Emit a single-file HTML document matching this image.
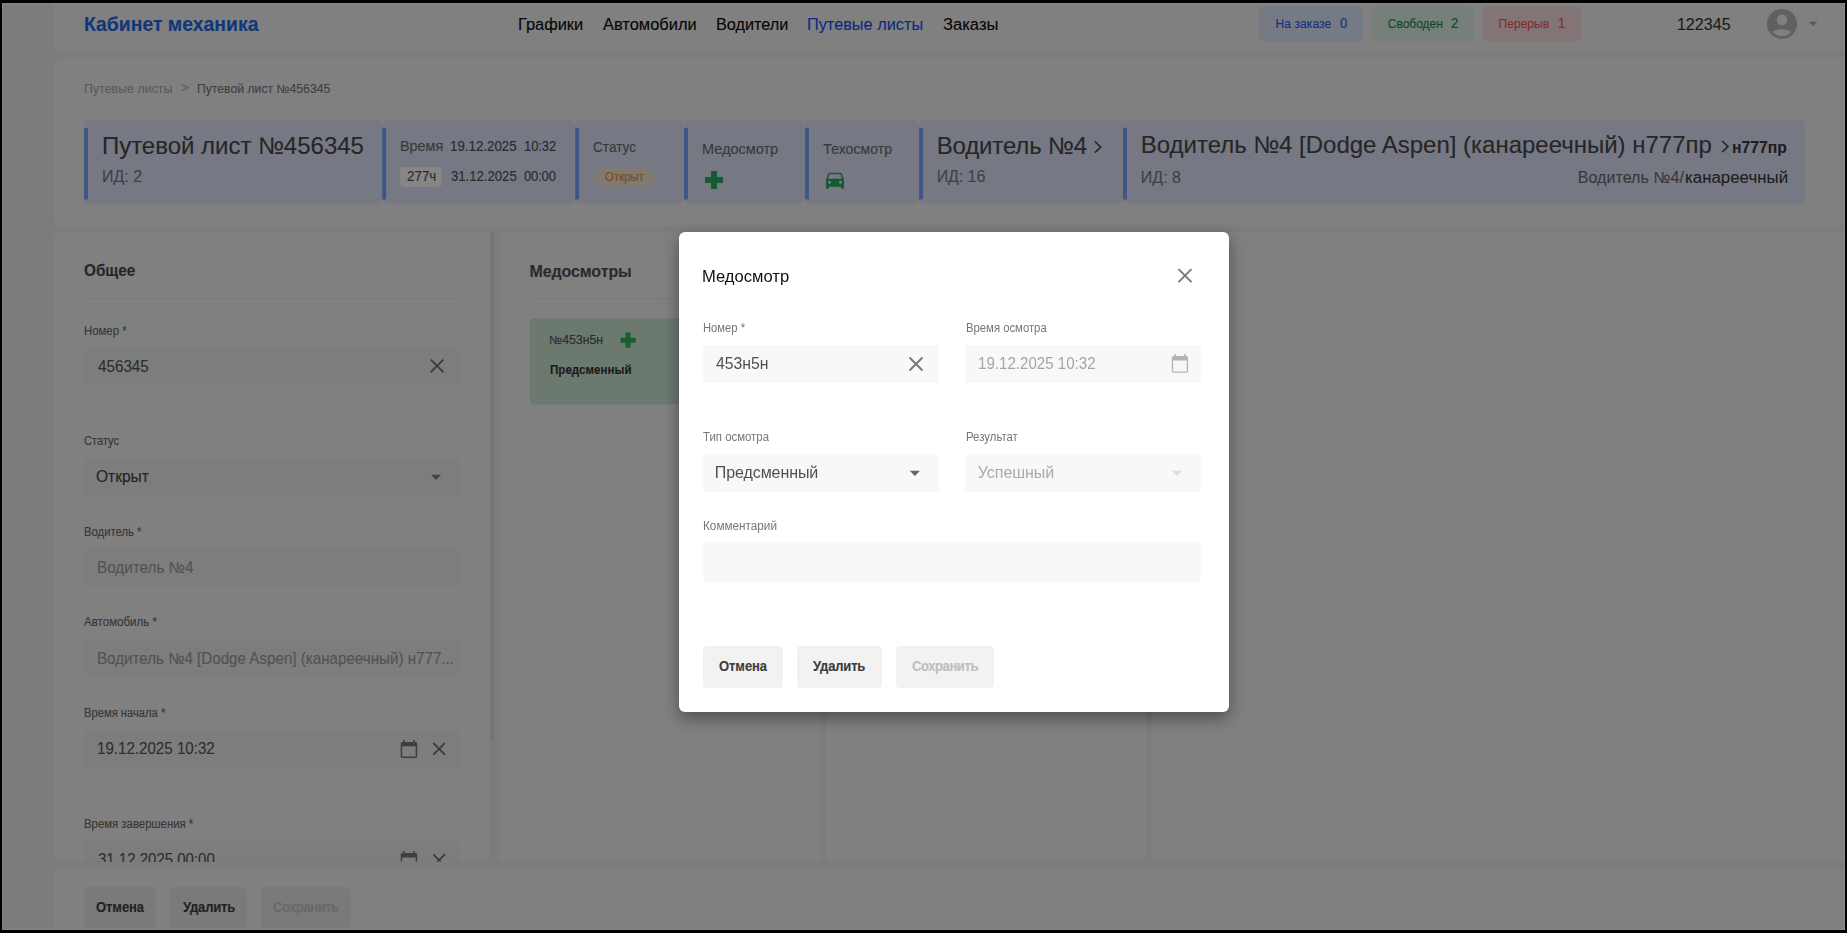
<!DOCTYPE html>
<html lang="ru"><head><meta charset="utf-8"><title>Кабинет механика</title>
<style>
html,body{margin:0;padding:0;background:#000;}
body{position:relative;width:1847px;height:933px;overflow:hidden;font-family:"Liberation Sans", sans-serif;}
body>div,.tx span{position:absolute;display:block;}
.lay{position:absolute;left:0;top:0;}
.tx span{white-space:pre;transform-origin:0 0;}
#texts span{-webkit-text-stroke:0.12px currentColor;}
#texts{left:0;top:0;}
#mtexts{position:absolute;left:0;top:0;width:1847px;height:933px;will-change:transform;}
</style></head>
<body>
<svg class="lay" width="1847" height="933" viewBox="0 0 1847 933">
<path fill="#7c7c7c" d="M2 3H1845V930H2V3Z"/>
<path fill="#808080" d="M54 3H1845V52H60A6 6 0 0 1 54 46V3Z"/>
<path fill="#767a84" d="M1264.1 6.2H1358.1A5 5 0 0 1 1363.1 11.2V36.8A5 5 0 0 1 1358.1 41.8H1264.1A5 5 0 0 1 1259.1 36.8V11.2A5 5 0 0 1 1264.1 6.2Z"/>
<path fill="#767f79" d="M1376.3 6.2H1469A5 5 0 0 1 1474 11.2V36.8A5 5 0 0 1 1469 41.8H1376.3A5 5 0 0 1 1371.3 36.8V11.2A5 5 0 0 1 1376.3 6.2Z"/>
<path fill="#837575" d="M1487.3 6.2H1575.9A5 5 0 0 1 1580.9 11.2V36.8A5 5 0 0 1 1575.9 41.8H1487.3A5 5 0 0 1 1482.3 36.8V11.2A5 5 0 0 1 1487.3 6.2Z"/>
<path fill="#808080" d="M60 58H1845V226H60A6 6 0 0 1 54 220V64A6 6 0 0 1 60 58Z"/>
<path fill="#767983" d="M88.8 120H376.9A5 5 0 0 1 381.9 125V198.8A5 5 0 0 1 376.9 203.8H88.8A5 5 0 0 1 83.8 198.8V125A5 5 0 0 1 88.8 120Z"/>
<path fill="#767983" d="M386.9 120H569.8A5 5 0 0 1 574.8 125V198.8A5 5 0 0 1 569.8 203.8H386.9A5 5 0 0 1 381.9 198.8V125A5 5 0 0 1 386.9 120Z"/>
<path fill="#767983" d="M579.8 120H678.7A5 5 0 0 1 683.7 125V198.8A5 5 0 0 1 678.7 203.8H579.8A5 5 0 0 1 574.8 198.8V125A5 5 0 0 1 579.8 120Z"/>
<path fill="#767983" d="M688.7 120H799.7A5 5 0 0 1 804.7 125V198.8A5 5 0 0 1 799.7 203.8H688.7A5 5 0 0 1 683.7 198.8V125A5 5 0 0 1 688.7 120Z"/>
<path fill="#767983" d="M809.7 120H913.8A5 5 0 0 1 918.8 125V198.8A5 5 0 0 1 913.8 203.8H809.7A5 5 0 0 1 804.7 198.8V125A5 5 0 0 1 809.7 120Z"/>
<path fill="#767983" d="M923.8 120H1117.7A5 5 0 0 1 1122.7 125V198.8A5 5 0 0 1 1117.7 203.8H923.8A5 5 0 0 1 918.8 198.8V125A5 5 0 0 1 923.8 120Z"/>
<path fill="#767983" d="M1127.7 120H1799.6A5 5 0 0 1 1804.6 125V198.8A5 5 0 0 1 1799.6 203.8H1127.7A5 5 0 0 1 1122.7 198.8V125A5 5 0 0 1 1127.7 120Z"/>
<path fill="#3e5686" d="M84 128H87.9V199.5H84V128Z"/>
<path fill="#3e5686" d="M382.2 128H386.1V199.5H382.2V128Z"/>
<path fill="#3e5686" d="M575.2 128H579.1V199.5H575.2V128Z"/>
<path fill="#3e5686" d="M684 128H687.9V199.5H684V128Z"/>
<path fill="#3e5686" d="M805.1 128H809V199.5H805.1V128Z"/>
<path fill="#3e5686" d="M919.1 128H923V199.5H919.1V128Z"/>
<path fill="#3e5686" d="M1123 128H1126.9V199.5H1123V128Z"/>
<path fill="#868686" d="M404 167.1H437.8A4 4 0 0 1 441.8 171.1V182.8A4 4 0 0 1 437.8 186.8H404A4 4 0 0 1 400 182.8V171.1A4 4 0 0 1 404 167.1Z"/>
<path fill="#807a73" d="M603.1 167.8H645.8A10 10 0 0 1 655.8 177.8V176.8A10 10 0 0 1 645.8 186.8H603.1A10 10 0 0 1 593.1 176.8V177.8A10 10 0 0 1 603.1 167.8Z"/>
<path fill="#808080" d="M60 232H483.6A6 6 0 0 1 489.6 238V855.6A6 6 0 0 1 483.6 861.6H60A6 6 0 0 1 54 855.6V238A6 6 0 0 1 60 232Z"/>
<path fill="#747474" d="M492.3 232H492.1A2 2 0 0 1 494.1 234V740A2 2 0 0 1 492.1 742H492.3A2 2 0 0 1 490.3 740V234A2 2 0 0 1 492.3 232Z"/>
<path fill="#7a7a7a" d="M84.2 298H459.7V299H84.2V298Z"/>
<path fill="#7d7d7d" d="M87 348.1H456.7A3 3 0 0 1 459.7 351.1V382.1A3 3 0 0 1 456.7 385.1H87A3 3 0 0 1 84 382.1V351.1A3 3 0 0 1 87 348.1Z"/>
<path fill="#7d7d7d" d="M87 458H456.7A3 3 0 0 1 459.7 461V492.6A3 3 0 0 1 456.7 495.6H87A3 3 0 0 1 84 492.6V461A3 3 0 0 1 87 458Z"/>
<path fill="#7d7d7d" d="M87 548.1H456.7A3 3 0 0 1 459.7 551.1V582.7A3 3 0 0 1 456.7 585.7H87A3 3 0 0 1 84 582.7V551.1A3 3 0 0 1 87 548.1Z"/>
<path fill="#7d7d7d" d="M87 638.9H456.7A3 3 0 0 1 459.7 641.9V673.4A3 3 0 0 1 456.7 676.4H87A3 3 0 0 1 84 673.4V641.9A3 3 0 0 1 87 638.9Z"/>
<path fill="#7d7d7d" d="M87 730.3H456.7A3 3 0 0 1 459.7 733.3V764.6A3 3 0 0 1 456.7 767.6H87A3 3 0 0 1 84 764.6V733.3A3 3 0 0 1 87 730.3Z"/>
<path fill="#7d7d7d" d="M87 841.5H456.7A3 3 0 0 1 459.7 844.5V861.6H84V844.5A3 3 0 0 1 87 841.5Z"/>
<path fill="#808080" d="M505.7 232.2H814.5A6 6 0 0 1 820.5 238.2V855.8A6 6 0 0 1 814.5 861.8H505.7A6 6 0 0 1 499.7 855.8V238.2A6 6 0 0 1 505.7 232.2Z"/>
<path fill="#808080" d="M831.5 232.2H1140.1A6 6 0 0 1 1146.1 238.2V855.8A6 6 0 0 1 1140.1 861.8H831.5A6 6 0 0 1 825.5 855.8V238.2A6 6 0 0 1 831.5 232.2Z"/>
<path fill="#808080" d="M1157.8 232.2H1845V861.8H1157.8A6 6 0 0 1 1151.8 855.8V238.2A6 6 0 0 1 1157.8 232.2Z"/>
<path fill="#7a7a7a" d="M530.4 298H790V299H530.4V298Z"/>
<path fill="#6b796f" d="M533.9 318.2H786A4 4 0 0 1 790 322.2V400.6A4 4 0 0 1 786 404.6H533.9A4 4 0 0 1 529.9 400.6V322.2A4 4 0 0 1 533.9 318.2Z"/>
<path fill="#808080" d="M60 868H1845V930H54V874A6 6 0 0 1 60 868Z"/>
<path fill="#7a7a7a" d="M88.2 886.9H151.6A4 4 0 0 1 155.6 890.9V924.5A4 4 0 0 1 151.6 928.5H88.2A4 4 0 0 1 84.2 924.5V890.9A4 4 0 0 1 88.2 886.9Z"/>
<path fill="#7a7a7a" d="M173.9 886.9H243.1A4 4 0 0 1 247.1 890.9V924.5A4 4 0 0 1 243.1 928.5H173.9A4 4 0 0 1 169.9 924.5V890.9A4 4 0 0 1 173.9 886.9Z"/>
<path fill="#7a7a7a" d="M264.9 886.9H347.1A4 4 0 0 1 351.1 890.9V924.5A4 4 0 0 1 347.1 928.5H264.9A4 4 0 0 1 260.9 924.5V890.9A4 4 0 0 1 264.9 886.9Z"/>
<rect x="2.5" y="3.5" width="1842" height="926" fill="none" stroke="#ffffff" stroke-opacity="0.075"/>
</svg>
<div style="left:679.0px;top:232.0px;width:550.0px;height:480.0px;background:#ffffff;border-radius:6px;box-shadow:0 6px 16px rgba(0,0,0,.4);"></div>
<svg class="lay" width="1847" height="933" viewBox="0 0 1847 933">
<path fill="#f8f8f8" d="M707 345H935A4 4 0 0 1 939 349V379A4 4 0 0 1 935 383H707A4 4 0 0 1 703 379V349A4 4 0 0 1 707 345Z"/>
<path fill="#f8f8f8" d="M969 345H1197A4 4 0 0 1 1201 349V379A4 4 0 0 1 1197 383H969A4 4 0 0 1 965 379V349A4 4 0 0 1 969 345Z"/>
<path fill="#f8f8f8" d="M707 454H935A4 4 0 0 1 939 458V488A4 4 0 0 1 935 492H707A4 4 0 0 1 703 488V458A4 4 0 0 1 707 454Z"/>
<path fill="#f8f8f8" d="M969 454H1197A4 4 0 0 1 1201 458V488A4 4 0 0 1 1197 492H969A4 4 0 0 1 965 488V458A4 4 0 0 1 969 454Z"/>
<path fill="#f8f8f8" d="M707 542H1197A4 4 0 0 1 1201 546V578A4 4 0 0 1 1197 582H707A4 4 0 0 1 703 578V546A4 4 0 0 1 707 542Z"/>
<path fill="#f2f2f2" d="M707 646H779A4 4 0 0 1 783 650V684A4 4 0 0 1 779 688H707A4 4 0 0 1 703 684V650A4 4 0 0 1 707 646Z"/>
<path fill="#f2f2f2" d="M801 646H878A4 4 0 0 1 882 650V684A4 4 0 0 1 878 688H801A4 4 0 0 1 797 684V650A4 4 0 0 1 801 646Z"/>
<path fill="#f2f2f2" d="M900 646H990A4 4 0 0 1 994 650V684A4 4 0 0 1 990 688H900A4 4 0 0 1 896 684V650A4 4 0 0 1 900 646Z"/>
<g transform="translate(1767.00 8.90)"><path fill-rule="evenodd" fill="#606060" d="M15 0A15 15 0 1 0 15 30A15 15 0 1 0 15 0ZM15 5.7A5.3 5.3 0 1 1 15 16.3A5.3 5.3 0 1 1 15 5.7ZM5.6 22.9Q9.5 20.3 15 20.3Q20.5 20.3 24.4 22.9Q20.8 27.2 15 27.2Q9.2 27.2 5.6 22.9Z"/></g>
<g transform="translate(1808.90 21.70)"><path d="M0 0H8.4L4.2 4.6Z" fill="#5a5a5a"/></g>
<g transform="translate(705.00 171.00)"><path d="M6.0 0H12.0V6.0H18V12.0H12.0V18H6.0V12.0H0V6.0H6.0Z" fill="#165a32"/></g>
<g transform="translate(823.00 167.70)"><path fill="#165a32" d="M18.92 6.01C18.72 5.42 18.16 5 17.5 5h-11c-.66 0-1.21.42-1.42 1.01L3 12v8c0 .55.45 1 1 1h1c.55 0 1-.45 1-1v-1h12v1c0 .55.45 1 1 1h1c.55 0 1-.45 1-1v-8l-2.08-5.99zM6.5 16c-.83 0-1.5-.67-1.5-1.5S5.67 13 6.5 13s1.5.67 1.5 1.5S7.33 16 6.5 16zm11 0c-.83 0-1.5-.67-1.5-1.5s.67-1.5 1.5-1.5 1.5.67 1.5 1.5-.67 1.5-1.5 1.5zM5 11l1.5-4.5h11L19 11H5z"/></g>
<g transform="translate(1094.50 141.10)"><path d="M0.4 0.4L6.199999999999999 6.0L0.4 11.6" stroke="#262626" stroke-width="1.6" fill="none"/></g>
<g transform="translate(1721.80 140.60)"><path d="M0.4 0.4L6.199999999999999 6.0L0.4 11.6" stroke="#262626" stroke-width="1.6" fill="none"/></g>
<g transform="translate(437.10 365.90)"><path d="M-6.30 -6.30L6.30 6.30M6.30 -6.30L-6.30 6.30" stroke="#3a3a3a" stroke-width="1.8" fill="none"/></g>
<g transform="translate(431.10 474.80)"><path d="M0 0H10L5.0 5.2Z" fill="#444444"/></g>
<g transform="translate(400.70 739.90)"><path fill-rule="evenodd" fill="#3e3e3e" d="M2.4 0H4V2H12.70V0H14.30V2H14.80A1.7 1.7 0 0 1 16.5 3.7V16.30A1.7 1.7 0 0 1 14.80 18.0H1.7A1.7 1.7 0 0 1 0 16.30V3.7A1.7 1.7 0 0 1 1.7 2H2.4ZM1.5 6.3V16.50H15.00V6.3Z"/></g>
<g transform="translate(439.10 748.90)"><path d="M-5.75 -5.75L5.75 5.75M5.75 -5.75L-5.75 5.75" stroke="#3a3a3a" stroke-width="1.8" fill="none"/></g>
<clipPath id="cl"><rect x="390" y="840" width="80" height="21.6"/></clipPath>
<g clip-path="url(#cl)"><g transform="translate(400.70 851.10)"><path fill-rule="evenodd" fill="#3e3e3e" d="M2.4 0H4V2H12.70V0H14.30V2H14.80A1.7 1.7 0 0 1 16.5 3.7V16.30A1.7 1.7 0 0 1 14.80 18.0H1.7A1.7 1.7 0 0 1 0 16.30V3.7A1.7 1.7 0 0 1 1.7 2H2.4ZM1.5 6.3V16.50H15.00V6.3Z"/></g><g transform="translate(439.10 860.10)"><path d="M-5.75 -5.75L5.75 5.75M5.75 -5.75L-5.75 5.75" stroke="#3a3a3a" stroke-width="1.8" fill="none"/></g></g>
<g transform="translate(620.50 332.60)"><path d="M5.1 0H10.1V5.1H15.2V10.1H10.1V15.2H5.1V10.1H0V5.1H5.1Z" fill="#176030"/></g>
<g transform="translate(1185.00 275.70)"><path d="M-6.50 -6.50L6.50 6.50M6.50 -6.50L-6.50 6.50" stroke="#787878" stroke-width="1.9" fill="none"/></g>
<g transform="translate(916.00 364.00)"><path d="M-6.50 -6.50L6.50 6.50M6.50 -6.50L-6.50 6.50" stroke="#787878" stroke-width="1.9" fill="none"/></g>
<g transform="translate(1171.80 354.10)"><path fill-rule="evenodd" fill="#b4b4b4" d="M2.4 0H4V2H12.50V0H14.10V2H14.60A1.7 1.7 0 0 1 16.3 3.7V17.00A1.7 1.7 0 0 1 14.60 18.7H1.7A1.7 1.7 0 0 1 0 17.00V3.7A1.7 1.7 0 0 1 1.7 2H2.4ZM1.35 6.3V17.35H14.95V6.3Z"/></g>
<g transform="translate(909.80 470.80)"><path d="M0 0H10.1L5.05 5.2Z" fill="#666666"/></g>
<g transform="translate(1172.10 470.80)"><path d="M0 0H9.8L4.9 5.2Z" fill="#dcdcdc"/></g>
</svg>
<div id="texts" class="tx">
<span style="left:83.73px;top:11.00px;font-size:20px;line-height:26px;color:#103778;transform:scaleX(0.9694);font-weight:700;">Кабинет механика</span>
<span style="left:518.08px;top:14.00px;font-size:16px;line-height:21px;color:#060606;transform:scaleX(1.0233);">Графики</span>
<span style="left:603.00px;top:14.00px;font-size:16px;line-height:21px;color:#060606;transform:scaleX(1.0277);">Автомобили</span>
<span style="left:715.78px;top:14.00px;font-size:16px;line-height:21px;color:#060606;transform:scaleX(1.0152);">Водители</span>
<span style="left:807.28px;top:14.00px;font-size:16px;line-height:21px;color:#0c2a84;transform:scaleX(1.0187);">Путевые листы</span>
<span style="left:943.40px;top:14.00px;font-size:16px;line-height:21px;color:#060606;transform:scaleX(1.0365);">Заказы</span>
<span style="left:1275.60px;top:15.00px;font-size:12px;line-height:18px;color:#143084;letter-spacing:0.079px;">На заказе</span>
<span style="left:1340.00px;top:13.00px;font-size:14px;line-height:20px;color:#143084;transform:scaleX(0.9300);">0</span>
<span style="left:1387.80px;top:15.00px;font-size:12px;line-height:18px;color:#0c4a2a;letter-spacing:-0.020px;">Свободен</span>
<span style="left:1450.90px;top:13.00px;font-size:14px;line-height:20px;color:#0c4a2a;transform:scaleX(0.9300);">2</span>
<span style="left:1498.60px;top:15.00px;font-size:12px;line-height:18px;color:#862a32;letter-spacing:0.026px;">Перерыв</span>
<span style="left:1557.87px;top:13.00px;font-size:14px;line-height:20px;color:#862a32;transform:scaleX(0.9300);">1</span>
<span style="left:1676.90px;top:14.00px;font-size:16px;line-height:21px;color:#1a1a1a;letter-spacing:0.062px;">122345</span>
<span style="left:84.00px;top:80.00px;font-size:12px;line-height:18px;color:#5a5a5a;transform:scaleX(1.0345);">Путевые листы</span>
<span style="left:180.80px;top:78.00px;font-size:13px;line-height:19px;color:#5c5c5c;transform:scaleX(1.0500);">&gt;</span>
<span style="left:197.40px;top:80.00px;font-size:12px;line-height:18px;color:#404040;transform:scaleX(1.0168);">Путевой лист №456345</span>
<span style="left:101.90px;top:130.00px;font-size:24px;line-height:31px;color:#262626;letter-spacing:-0.004px;">Путевой лист №456345</span>
<span style="left:101.90px;top:166.00px;font-size:16px;line-height:21px;color:#404040;letter-spacing:0.018px;">ИД: 2</span>
<span style="left:399.57px;top:136.00px;font-size:14px;line-height:20px;color:#383838;transform:scaleX(1.0263);">Время</span>
<span style="left:449.85px;top:136.00px;font-size:14px;line-height:20px;color:#2a2a2a;transform:scaleX(0.9512);">19.12.2025</span>
<span style="left:523.77px;top:136.00px;font-size:14px;line-height:20px;color:#2a2a2a;letter-spacing:-0.094px;transform:scaleX(0.9300);">10:32</span>
<span style="left:406.80px;top:166.00px;font-size:14px;line-height:20px;color:#2a2a2a;transform:scaleX(0.9553);">277ч</span>
<span style="left:450.80px;top:166.00px;font-size:14px;line-height:20px;color:#2a2a2a;transform:scaleX(0.9376);">31.12.2025</span>
<span style="left:524.10px;top:166.00px;font-size:14px;line-height:20px;color:#2a2a2a;letter-spacing:-0.183px;transform:scaleX(0.9300);">00:00</span>
<span style="left:592.90px;top:137.00px;font-size:14px;line-height:20px;color:#383838;transform:scaleX(0.9716);">Статус</span>
<span style="left:604.70px;top:168.00px;font-size:12px;line-height:18px;color:#7b4b19;transform:scaleX(0.9546);">Открыт</span>
<span style="left:701.87px;top:139.00px;font-size:14px;line-height:20px;color:#383838;transform:scaleX(1.0348);">Медосмотр</span>
<span style="left:823.30px;top:139.00px;font-size:14px;line-height:20px;color:#383838;letter-spacing:0.064px;">Техосмотр</span>
<span style="left:936.70px;top:130.00px;font-size:24px;line-height:31px;color:#262626;letter-spacing:-0.143px;">Водитель №4</span>
<span style="left:936.70px;top:166.00px;font-size:16px;line-height:21px;color:#404040;letter-spacing:-0.085px;">ИД: 16</span>
<span style="left:1140.80px;top:129.00px;font-size:24px;line-height:31px;color:#262626;letter-spacing:-0.011px;">Водитель №4 [Dodge Aspen] (канареечный) н777пр</span>
<span style="left:1731.72px;top:137.00px;font-size:16px;line-height:21px;color:#1e1e1e;transform:scaleX(0.9814);font-weight:700;">н777пр</span>
<span style="left:1140.80px;top:167.00px;font-size:16px;line-height:21px;color:#404040;letter-spacing:0.018px;">ИД: 8</span>
<span style="left:1577.80px;top:167.00px;font-size:16px;line-height:21px;color:#383838;letter-spacing:0.047px;">Водитель №4/</span>
<span style="left:1684.65px;top:167.00px;font-size:16px;line-height:21px;color:#1e1e1e;letter-spacing:0.037px;transform:scaleX(1.0500);">канареечный</span>
<span style="left:84.20px;top:260.00px;font-size:16px;line-height:21px;color:#262626;transform:scaleX(0.9567);font-weight:700;">Общее</span>
<span style="left:84.20px;top:322.00px;font-size:12px;line-height:18px;color:#363636;transform:scaleX(0.9476);">Номер *</span>
<span style="left:97.70px;top:356.00px;font-size:16px;line-height:21px;color:#2d2d2d;transform:scaleX(0.9515);">456345</span>
<span style="left:84.20px;top:432.00px;font-size:12px;line-height:18px;color:#363636;letter-spacing:-0.038px;transform:scaleX(0.9300);">Статус</span>
<span style="left:96.40px;top:466.00px;font-size:16px;line-height:21px;color:#222222;transform:scaleX(0.9697);">Открыт</span>
<span style="left:84.20px;top:523.00px;font-size:12px;line-height:18px;color:#363636;transform:scaleX(0.9406);">Водитель *</span>
<span style="left:96.75px;top:557.00px;font-size:16px;line-height:21px;color:#525252;transform:scaleX(0.9532);">Водитель №4</span>
<span style="left:84.20px;top:613.00px;font-size:12px;line-height:18px;color:#363636;transform:scaleX(0.9615);">Автомобиль *</span>
<span style="left:96.75px;top:648.00px;font-size:16px;line-height:21px;color:#525252;transform:scaleX(0.9475);">Водитель №4 [Dodge Aspen] (канареечный) н777...</span>
<span style="left:84.20px;top:704.00px;font-size:12px;line-height:18px;color:#363636;transform:scaleX(0.9336);">Время начала *</span>
<span style="left:96.75px;top:738.00px;font-size:16px;line-height:21px;color:#2d2d2d;transform:scaleX(0.9453);">19.12.2025 10:32</span>
<span style="left:84.20px;top:815.00px;font-size:12px;line-height:18px;color:#363636;transform:scaleX(0.9476);">Время завершения *</span>
<span style="left:97.70px;top:849.00px;font-size:16px;line-height:21px;color:#2d2d2d;transform:scaleX(0.9377);height:12.6px;overflow:hidden;">31.12.2025 00:00</span>
<span style="left:96.20px;top:897.00px;font-size:14px;line-height:20px;color:#222222;letter-spacing:-0.082px;transform:scaleX(0.9300);font-weight:700;">Отмена</span>
<span style="left:182.80px;top:897.00px;font-size:14px;line-height:20px;color:#222222;letter-spacing:-0.234px;transform:scaleX(0.9300);font-weight:700;">Удалить</span>
<span style="left:273.10px;top:897.00px;font-size:14px;line-height:20px;color:#686868;letter-spacing:-0.481px;transform:scaleX(0.9300);font-weight:700;">Сохранить</span>
<span style="left:529.40px;top:261.00px;font-size:16px;line-height:21px;color:#2a2a2a;letter-spacing:-0.084px;font-weight:700;">Медосмотры</span>
<span style="left:549.27px;top:331.00px;font-size:12px;line-height:18px;color:#2a2a2e;transform:scaleX(1.0255);">№453н5н</span>
<span style="left:550.30px;top:361.00px;font-size:12px;line-height:18px;color:#1a1a1a;transform:scaleX(0.9660);font-weight:700;">Предсменный</span>
<span style="left:719.00px;top:656.00px;font-size:14px;line-height:20px;color:#3c3c3c;letter-spacing:-0.082px;transform:scaleX(0.9300);font-weight:700;">Отмена</span>
<span style="left:813.20px;top:656.00px;font-size:14px;line-height:20px;color:#3c3c3c;letter-spacing:-0.198px;transform:scaleX(0.9300);font-weight:700;">Удалить</span>
<span style="left:912.10px;top:656.00px;font-size:14px;line-height:20px;color:#bebebe;letter-spacing:-0.441px;transform:scaleX(0.9300);font-weight:700;">Сохранить</span>
</div>
<div id="mtexts" class="tx">
<span style="left:702.36px;top:266.00px;font-size:16px;line-height:21px;color:#111111;transform:scaleX(1.0365);">Медосмотр</span>
<span style="left:703.40px;top:319.00px;font-size:12px;line-height:18px;color:#767676;transform:scaleX(0.9366);">Номер *</span>
<span style="left:965.50px;top:319.00px;font-size:12px;line-height:18px;color:#767676;transform:scaleX(0.9425);">Время осмотра</span>
<span style="left:716.30px;top:353.00px;font-size:16px;line-height:21px;color:#505050;transform:scaleX(0.9861);">453н5н</span>
<span style="left:977.66px;top:353.00px;font-size:16px;line-height:21px;color:#a5a5a5;transform:scaleX(0.9437);">19.12.2025 10:32</span>
<span style="left:703.40px;top:428.00px;font-size:12px;line-height:18px;color:#767676;transform:scaleX(0.9493);">Тип осмотра</span>
<span style="left:965.50px;top:428.00px;font-size:12px;line-height:18px;color:#767676;transform:scaleX(0.9496);">Результат</span>
<span style="left:714.80px;top:462.00px;font-size:16px;line-height:21px;color:#505050;letter-spacing:-0.085px;">Предсменный</span>
<span style="left:977.80px;top:462.00px;font-size:16px;line-height:21px;color:#aaaaaa;letter-spacing:-0.047px;">Успешный</span>
<span style="left:703.40px;top:517.00px;font-size:12px;line-height:18px;color:#767676;transform:scaleX(0.9789);">Комментарий</span>
</div>
</body></html>
